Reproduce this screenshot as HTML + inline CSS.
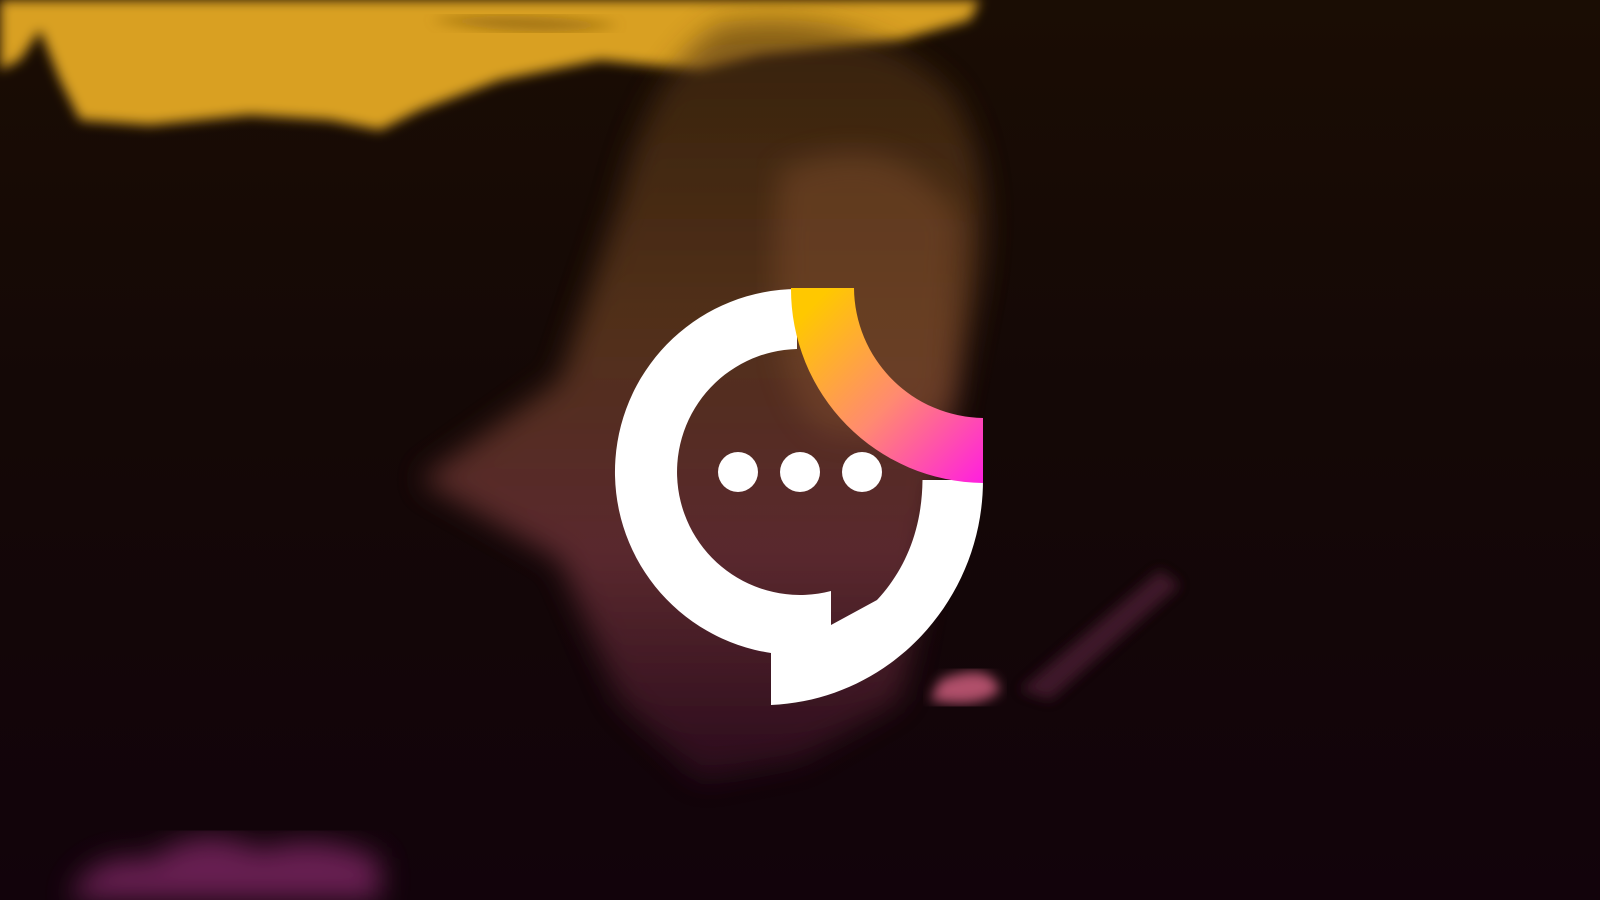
<!DOCTYPE html>
<html><head><meta charset="utf-8"><style>
html,body{margin:0;padding:0;width:1600px;height:900px;overflow:hidden;background:#130806}
svg{display:block}
</style></head><body>
<svg width="1600" height="900" viewBox="0 0 1600 900" xmlns="http://www.w3.org/2000/svg">
<defs>
<linearGradient id="bg" x1="0" y1="0" x2="0" y2="1">
<stop offset="0" stop-color="#1a0d04"/><stop offset="0.45" stop-color="#140806"/><stop offset="1" stop-color="#12030b"/>
</linearGradient>
<linearGradient id="hair" x1="0" y1="0" x2="0" y2="1">
<stop offset="0" stop-color="#4a3010"/><stop offset="0.4" stop-color="#7a4a28"/><stop offset="0.7" stop-color="#8a4048"/><stop offset="1" stop-color="#3a1028"/>
</linearGradient>
<linearGradient id="g" x1="0" y1="0" x2="1" y2="1">
<stop offset="0.1" stop-color="#ffc800"/><stop offset="0.55" stop-color="#ff8a70"/><stop offset="1" stop-color="#ff1ee0"/>
</linearGradient>
<filter id="b20"><feGaussianBlur stdDeviation="14"/></filter>
<filter id="b8"><feGaussianBlur stdDeviation="6"/></filter>
</defs>
<rect width="1600" height="900" fill="url(#bg)"/>
<path d="M0 0 H980 L970 20 L900 40 L760 55 L700 70 L600 60 L500 80 L420 110 L380 130 L330 120 L250 115 L150 125 L80 120 L60 80 L40 30 L20 60 L0 70 Z" fill="#d9a020" filter="url(#b8)"/>
<path d="M430 20 Q520 10 620 25 Q540 40 430 20Z" fill="#8a6010" filter="url(#b8)" opacity="0.7"/>
<path d="M720 25 Q860 5 950 90 Q1000 170 975 300 L950 430 Q920 600 900 700 L800 760 L700 780 L620 700 L560 560 L420 480 L560 380 L620 200 Q650 70 720 25Z" fill="url(#hair)" filter="url(#b20)" opacity="0.6"/>
<path d="M780 170 Q900 120 960 220 L950 400 Q900 450 820 430 Q760 380 780 170Z" fill="#8a5530" filter="url(#b20)" opacity="0.4"/>
<path d="M940 680 Q990 660 1000 690 Q980 710 930 700Z" fill="#b0506a" filter="url(#b8)"/>
<path d="M1020 690 L1160 570 L1180 585 L1050 700Z" fill="#4a1a30" filter="url(#b8)" opacity="0.8"/>
<path d="M70 900 Q90 850 150 860 Q200 820 260 850 Q320 830 380 860 L380 900Z" fill="#a03080" filter="url(#b20)" opacity="0.6"/>
<path fill-rule="evenodd" fill="#fff" d="M983 480 C983 600 890 700 771 705 L771 653 A183 183 0 0 1 797 289 L797 349 A123 123 0 1 0 831 591 L831 625 L877 600 C905 570 922 530 922.5 480 Z"/>
<path fill="url(#g)" d="M791 288 A194 194 0 0 0 983 483 L983 418 A131 131 0 0 1 854 288 Z"/>
<circle cx="738" cy="472" r="20" fill="#fff"/>
<circle cx="800" cy="472" r="20" fill="#fff"/>
<circle cx="862" cy="472" r="20" fill="#fff"/>
</svg>
</body></html>
